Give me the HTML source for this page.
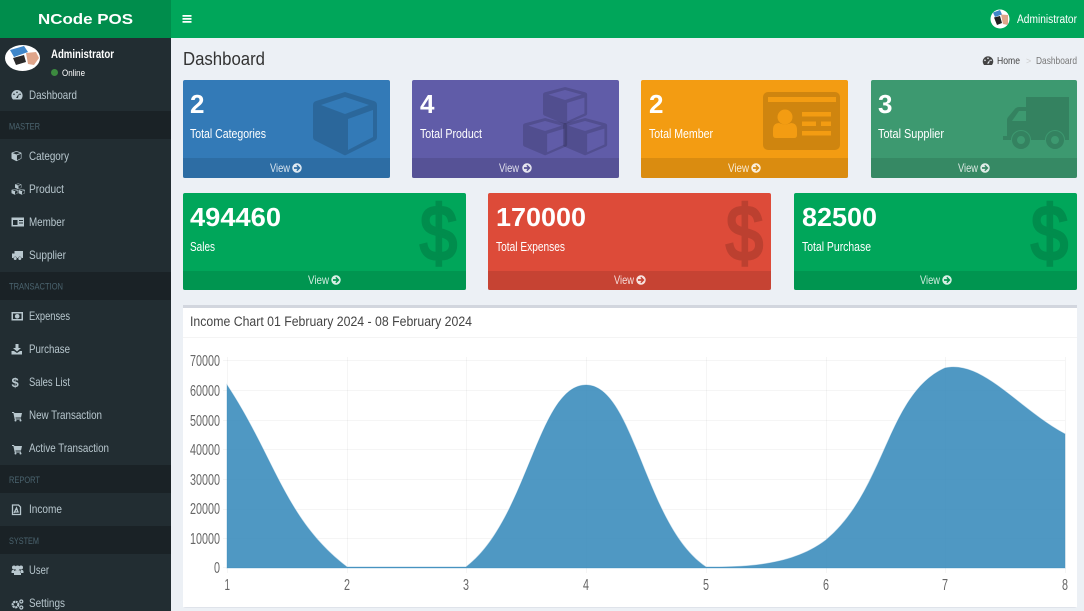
<!DOCTYPE html>
<html lang="en">
<head>
<meta charset="utf-8">
<title>NCode POS - Dashboard</title>
<style>
html,body{margin:0;padding:0;width:1084px;height:611px;overflow:hidden;background:#ecf0f5}
svg{display:block}
text{font-family:"Liberation Sans",sans-serif}
.nav{font-size:12px;fill:#b8c7ce}
.sec{font-size:9.500px;fill:#4b646f}
.num{font-size:26px;font-weight:bold;fill:#fff}
.lbl{font-size:12.500px;fill:#fff}
.view{font-size:12px;fill:rgba(255,255,255,.82)}
.ax{font-size:16px;fill:#666}
.ni{fill:#b8c7ce}
.dk{fill:rgba(0,0,0,.15)}
.ft{fill:rgba(0,0,0,.1)}
</style>
</head>
<body>
<svg width="1084" height="611" viewBox="0 0 1084 611" xmlns="http://www.w3.org/2000/svg">
<defs>
<path id="cube" fill-rule="evenodd" d="M32 0 L61 9 Q64 10 64 13 L64 45 Q64 48 61 49 L33 63 Q32 63.500 31 63 L3 49 Q0 48 0 45 L0 13 Q0 10 3 9 Z M32 5 L8 13 L32 22 L56 13 Z M35 27 L35 58 L60 45 L60 18 Z"/>
<path id="arrow" fill-rule="evenodd" d="M0 -4.700 A4.700 4.700 0 1 1 -0.010 -4.700 Z M0.300 -3.200 L-0.700 -2.200 L0.600 -0.900 L-3 -0.900 L-3 0.900 L0.600 0.900 L-0.700 2.200 L0.300 3.200 L3.500 0 Z"/>
<path id="cart" d="M0 0 H2 L2.400 1 H10 L9 5.500 H3.500 L3.700 6.500 H9 V7.500 H2.700 L1.400 1 H0 Z"/>
<clipPath id="av1"><ellipse cx="22.500" cy="58" rx="17.500" ry="13"/></clipPath>
<clipPath id="av2"><circle cx="1000" cy="19" r="9.500"/></clipPath>
</defs>

<!-- page -->
<rect width="1084" height="611" fill="#ecf0f5"/>

<!-- header -->
<rect x="171" width="913" height="38" fill="#00a65a"/>
<rect width="171" height="38" fill="#008d4c"/>
<text x="38" y="24" font-size="15" font-weight="bold" fill="#fff" textLength="95" lengthAdjust="spacingAndGlyphs">NCode POS</text>
<path d="M182.500 15h9v1.700h-9zM182.500 18h9v1.700h-9zM182.500 21h9v1.700h-9z" fill="#fff"/>
<circle cx="1000" cy="19" r="9.500" fill="#fff"/>
<g clip-path="url(#av2)">
<path d="M993 12.500 L1000 10 L1002 14.500 L995 17 Z" fill="#3f86c9"/>
<path d="M994 17.500 L1000 16 L1002 23 L997 25 Z" fill="#222"/>
<path d="M1001 14.500 L1008 15 L1008 25 L1003 24 Z" fill="#dfa58a"/>
</g>
<text x="1017" y="23" font-size="11.500" fill="#fff" textLength="60" lengthAdjust="spacingAndGlyphs">Administrator</text>

<!-- sidebar -->
<rect y="38" width="171" height="573" fill="#222d32"/>
<ellipse cx="22.500" cy="58" rx="17.500" ry="13" fill="#fff"/>
<g clip-path="url(#av1)">
<path d="M10 50 L24 46 L28 52 L14 57 Z" fill="#3f86c9"/>
<path d="M13 58 L24 55 L26 62 L16 65 Z" fill="#2a2a2a"/>
<path d="M26 53 L36 52 L39 58 L34 65 L28 64 Z" fill="#dfa58a"/>
</g>
<text x="51" y="58" font-size="11.500" font-weight="bold" fill="#fff" textLength="63" lengthAdjust="spacingAndGlyphs">Administrator</text>
<circle cx="54.500" cy="72.500" r="3.500" fill="#3c8a3f"/>
<text x="62" y="76" font-size="9" fill="#fff" textLength="23" lengthAdjust="spacingAndGlyphs">Online</text>

<rect y="111" width="171" height="28" fill="#1a2226"/>
<rect y="272" width="171" height="28" fill="#1a2226"/>
<rect y="465" width="171" height="28" fill="#1a2226"/>
<rect y="526" width="171" height="28" fill="#1a2226"/>
<text class="sec" x="9" y="129.500" textLength="31" lengthAdjust="spacingAndGlyphs">MASTER</text>
<text class="sec" x="9" y="289.500" textLength="54" lengthAdjust="spacingAndGlyphs">TRANSACTION</text>
<text class="sec" x="9" y="483" textLength="31" lengthAdjust="spacingAndGlyphs">REPORT</text>
<text class="sec" x="9" y="544" textLength="30" lengthAdjust="spacingAndGlyphs">SYSTEM</text>

<text class="nav" x="29" y="99" textLength="48" lengthAdjust="spacingAndGlyphs">Dashboard</text>
<text class="nav" x="29" y="160" textLength="40" lengthAdjust="spacingAndGlyphs">Category</text>
<text class="nav" x="29" y="193" textLength="35" lengthAdjust="spacingAndGlyphs">Product</text>
<text class="nav" x="29" y="226" textLength="36" lengthAdjust="spacingAndGlyphs">Member</text>
<text class="nav" x="29" y="259" textLength="37" lengthAdjust="spacingAndGlyphs">Supplier</text>
<text class="nav" x="29" y="320" textLength="41" lengthAdjust="spacingAndGlyphs">Expenses</text>
<text class="nav" x="29" y="353" textLength="41" lengthAdjust="spacingAndGlyphs">Purchase</text>
<text class="nav" x="29" y="386" textLength="41" lengthAdjust="spacingAndGlyphs">Sales List</text>
<text class="nav" x="29" y="419" textLength="73" lengthAdjust="spacingAndGlyphs">New Transaction</text>
<text class="nav" x="29" y="452" textLength="80" lengthAdjust="spacingAndGlyphs">Active Transaction</text>
<text class="nav" x="29" y="513" textLength="33" lengthAdjust="spacingAndGlyphs">Income</text>
<text class="nav" x="29" y="574" textLength="20" lengthAdjust="spacingAndGlyphs">User</text>
<text class="nav" x="29" y="607" textLength="36" lengthAdjust="spacingAndGlyphs">Settings</text>

<!-- sidebar icons -->
<path class="ni" fill-rule="evenodd" d="M13 99.500 A5.600 5.600 0 1 1 21 99.500 Z M17 91.500 a.8 .8 0 1 0 .01 0 Z M14 93.500 a.8 .8 0 1 0 .01 0 Z M20 93.500 a.8 .8 0 1 0 .01 0 Z M16 98 L18 98 L19 93.500 Z"/>
<use href="#cube" class="ni" transform="translate(11.500,151) scale(.156,.16)"/>
<g class="ni">
<use href="#cube" transform="translate(15,183.500) scale(.1,.09)"/>
<use href="#cube" transform="translate(11.500,189) scale(.1,.09)"/>
<use href="#cube" transform="translate(18.500,189) scale(.1,.09)"/>
</g>
<path class="ni" fill-rule="evenodd" d="M11.500 217.500 H24 V226.500 H11.500 Z M13 220 V225 H17.500 V220 Z M19 220 V221 H23 V220 Z M19 222.500 V223.500 H23 V222.500 Z"/>
<path class="ni" d="M12 253.500 L14.500 253.500 L14.500 251 H23 V258 H21.500 A1.800 1.800 0 0 0 18 258 H17 A1.800 1.800 0 0 0 13.500 258 H12 Z"/>
<circle class="ni" cx="15.200" cy="258.500" r="1.500"/><circle class="ni" cx="19.800" cy="258.500" r="1.500"/>
<path class="ni" fill-rule="evenodd" d="M11.500 312 H23 V320.500 H11.500 Z M13 313.500 V319 H21.500 V313.500 Z M17.200 314 A2.300 2.300 0 1 1 17.190 314 Z"/>
<path class="ni" d="M15.500 344 H18.500 V348 H21 L17 351.500 L13 348 H15.500 Z M11.500 351 H14 L17 353 L20 351 H22 V354.500 H11.500 Z"/>
<text x="11.500" y="387" font-size="13" font-weight="bold" fill="#b8c7ce">$</text>
<use href="#cart" class="ni" transform="translate(12,412)"/>
<circle class="ni" cx="15.500" cy="420.500" r="1"/><circle class="ni" cx="20.500" cy="420.500" r="1"/>
<use href="#cart" class="ni" transform="translate(12,445)"/>
<circle class="ni" cx="15.500" cy="453.500" r="1"/><circle class="ni" cx="20.500" cy="453.500" r="1"/>
<path fill="none" stroke="#b8c7ce" stroke-width="1.300" d="M12.500 505 H18.500 L20.500 507 V514.500 H12.500 Z M14 513 L16.500 508 L18 512 H14.500"/>
<g class="ni">
<circle cx="14" cy="567.500" r="2"/><circle cx="21" cy="567.500" r="2"/><circle cx="17.500" cy="568" r="2.500"/>
<path d="M11.500 571.500 Q12 569.500 14 570 L14.500 573 H11.500 Z M23.500 571.500 Q23 569.500 21 570 L20.500 573 H23.500 Z M14 571 Q17.500 569 21 571 V575 H14 Z"/>
</g>
<g fill="none" stroke="#b8c7ce">
<circle cx="15.500" cy="604.500" r="2.800" stroke-width="2.200" stroke-dasharray="2 .6"/>
<circle cx="21.300" cy="601.500" r="1.500" stroke-width="1.200"/>
<circle cx="21.300" cy="607.500" r="1.500" stroke-width="1.200"/>
</g>

<!-- page heading -->
<text x="183" y="65" font-size="18" fill="#333" textLength="82" lengthAdjust="spacingAndGlyphs">Dashboard</text>
<path fill="#444" fill-rule="evenodd" d="M984 65 A5.300 5.300 0 1 1 992 65 Z M988 57.500 a.8 .8 0 1 0 .01 0 Z M985 59.500 a.8 .8 0 1 0 .01 0 Z M991 59.500 a.8 .8 0 1 0 .01 0 Z M987 63.500 L989 63.500 L990 59.500 Z"/>
<text x="997" y="64" font-size="10.500" fill="#444" textLength="23" lengthAdjust="spacingAndGlyphs">Home</text>
<text x="1026" y="64" font-size="9" fill="#ccc">&gt;</text>
<text x="1036" y="64" font-size="10.500" fill="#777" textLength="41" lengthAdjust="spacingAndGlyphs">Dashboard</text>

<!-- row 1 -->
<rect x="183" y="80" width="207" height="98" rx="2" fill="#337ab7"/>
<rect x="183" y="158" width="207" height="20" class="ft"/>
<use href="#cube" class="dk" transform="translate(313,92)"/>
<text class="num" x="190" y="113">2</text>
<text class="lbl" x="190" y="138" textLength="76" lengthAdjust="spacingAndGlyphs">Total Categories</text>
<text class="view" x="270" y="172" textLength="20" lengthAdjust="spacingAndGlyphs">View</text>
<use href="#arrow" fill="#fff" fill-opacity=".85" transform="translate(297,168)"/>

<rect x="412" y="80" width="207" height="98" rx="2" fill="#605ca8"/>
<rect x="412" y="158" width="207" height="20" class="ft"/>
<g class="dk">
<use href="#cube" transform="translate(543,87) scale(.69,.59)"/>
<use href="#cube" transform="translate(523,118) scale(.69,.59)"/>
<use href="#cube" transform="translate(563,118) scale(.69,.59)"/>
</g>
<text class="num" x="420" y="113">4</text>
<text class="lbl" x="420" y="138" textLength="62" lengthAdjust="spacingAndGlyphs">Total Product</text>
<text class="view" x="499" y="172" textLength="20" lengthAdjust="spacingAndGlyphs">View</text>
<use href="#arrow" fill="#fff" fill-opacity=".85" transform="translate(527,168)"/>

<rect x="641" y="80" width="207" height="98" rx="2" fill="#f39c12"/>
<rect x="641" y="158" width="207" height="20" class="ft"/>
<rect x="763" y="92" width="77" height="58" rx="5" fill="#cf850f"/>
<g fill="#f39c12">
<rect x="768" y="97" width="68" height="5"/>
<circle cx="785" cy="117" r="7.500"/>
<path d="M773 130 Q773 123 779 123 Q785 126 791 123 Q797 123 797 130 V135 Q797 138 794 138 H776 Q773 138 773 135 Z"/>
<rect x="802" y="112" width="29" height="4.500"/>
<rect x="802" y="121.500" width="14" height="4.500"/>
<rect x="821" y="121.500" width="10" height="4.500"/>
<rect x="802" y="131" width="29" height="4.500"/>
</g>
<text class="num" x="649" y="113">2</text>
<text class="lbl" x="649" y="138" textLength="64" lengthAdjust="spacingAndGlyphs">Total Member</text>
<text class="view" x="728" y="172" textLength="21" lengthAdjust="spacingAndGlyphs">View</text>
<use href="#arrow" fill="#fff" fill-opacity=".85" transform="translate(756,168)"/>

<rect x="871" y="80" width="206" height="98" rx="2" fill="#3d9970"/>
<rect x="871" y="158" width="206" height="20" class="ft"/>
<path fill="#348260" fill-rule="evenodd" d="M1026 97 H1069 V140 H1065 A10 10 0 0 0 1045 140 H1031 A10 10 0 0 0 1011 140 H1003 V136 H1007 V120 Q1007 118 1009 116 L1014 110 Q1016 107 1019 107 H1026 Z M1012 121 H1026 V111 H1019 Z"/>
<path fill="#348260" fill-rule="evenodd" d="M1021 131 A9 9 0 1 1 1020.990 131 Z M1021 136 A4 4 0 1 0 1021.010 136 Z M1055 131 A9 9 0 1 1 1054.990 131 Z M1055 136 A4 4 0 1 0 1055.010 136 Z"/>
<text class="num" x="878" y="113">3</text>
<text class="lbl" x="878" y="138" textLength="66" lengthAdjust="spacingAndGlyphs">Total Supplier</text>
<text class="view" x="958" y="172" textLength="20" lengthAdjust="spacingAndGlyphs">View</text>
<use href="#arrow" fill="#fff" fill-opacity=".85" transform="translate(985,168)"/>

<!-- row 2 -->
<rect x="183" y="193" width="283" height="97" rx="2" fill="#00a65a"/>
<rect x="183" y="271" width="283" height="19" class="ft"/>
<text x="420" y="260" font-size="78" fill="#008d4d" stroke="#008d4d" stroke-width="3" textLength="37" lengthAdjust="spacingAndGlyphs">$</text>
<text class="num" x="190" y="226" textLength="91" lengthAdjust="spacingAndGlyphs">494460</text>
<text class="lbl" x="190" y="251" textLength="25" lengthAdjust="spacingAndGlyphs">Sales</text>
<text class="view" x="308" y="284" textLength="21" lengthAdjust="spacingAndGlyphs">View</text>
<use href="#arrow" fill="#fff" fill-opacity=".85" transform="translate(336,280)"/>

<rect x="488" y="193" width="283" height="97" rx="2" fill="#dd4b39"/>
<rect x="488" y="271" width="283" height="19" class="ft"/>
<text x="726" y="260" font-size="78" fill="#bc4030" stroke="#bc4030" stroke-width="3" textLength="37" lengthAdjust="spacingAndGlyphs">$</text>
<text class="num" x="496" y="226" textLength="90" lengthAdjust="spacingAndGlyphs">170000</text>
<text class="lbl" x="496" y="251" textLength="69" lengthAdjust="spacingAndGlyphs">Total Expenses</text>
<text class="view" x="614" y="284" textLength="20" lengthAdjust="spacingAndGlyphs">View</text>
<use href="#arrow" fill="#fff" fill-opacity=".85" transform="translate(641,280)"/>

<rect x="794" y="193" width="283" height="97" rx="2" fill="#00a65a"/>
<rect x="794" y="271" width="283" height="19" class="ft"/>
<text x="1031" y="260" font-size="78" fill="#008d4d" stroke="#008d4d" stroke-width="3" textLength="37" lengthAdjust="spacingAndGlyphs">$</text>
<text class="num" x="802" y="226" textLength="75" lengthAdjust="spacingAndGlyphs">82500</text>
<text class="lbl" x="802" y="251" textLength="69" lengthAdjust="spacingAndGlyphs">Total Purchase</text>
<text class="view" x="920" y="284" textLength="20" lengthAdjust="spacingAndGlyphs">View</text>
<use href="#arrow" fill="#fff" fill-opacity=".85" transform="translate(947,280)"/>

<!-- chart box -->
<rect x="183" y="305" width="894" height="303" rx="3" fill="#dfe3ea"/>
<rect x="183" y="305" width="894" height="3" fill="#d2d6de"/>
<rect x="183" y="308" width="894" height="299" fill="#fff"/>
<rect x="183" y="337" width="894" height="1" fill="#f4f4f4"/>
<text x="190" y="326" font-size="13.500" fill="#444" textLength="282" lengthAdjust="spacingAndGlyphs">Income Chart 01 February 2024 - 08 February 2024</text>

<g stroke="#000" stroke-opacity=".04" stroke-width="1">
<path d="M223 360.500H1065M223 390.500H1065M223 420.500H1065M223 449.500H1065M223 479.500H1065M223 509.500H1065M223 538.500H1065M223 567.500H1065"/>
<path d="M227.500 357V573M347.500 357V573M466.500 357V573M586.500 357V573M706.500 357V573M826.500 357V573M945.500 357V573M1065.500 357V573"/>
</g>

<path fill="#3c8dbc" fill-opacity=".9" stroke="#3c8dbc" stroke-opacity=".35" stroke-width="1" d="M227 385 C275 458 285 520 347 567 C381 567 432 567 466 567 C528 520 538 385 586 385 C634 385 645 527 706 567 C741 567 791 567 826 540 C886 490 887 394 945 368 C983 360 1017 408 1065 434 L1065 568 L227 568 Z"/>

<g class="ax" text-anchor="end">
<text x="220" y="366" textLength="30" lengthAdjust="spacingAndGlyphs">70000</text>
<text x="220" y="396" textLength="30" lengthAdjust="spacingAndGlyphs">60000</text>
<text x="220" y="426" textLength="30" lengthAdjust="spacingAndGlyphs">50000</text>
<text x="220" y="455" textLength="30" lengthAdjust="spacingAndGlyphs">40000</text>
<text x="220" y="485" textLength="30" lengthAdjust="spacingAndGlyphs">30000</text>
<text x="220" y="514" textLength="30" lengthAdjust="spacingAndGlyphs">20000</text>
<text x="220" y="544" textLength="30" lengthAdjust="spacingAndGlyphs">10000</text>
<text x="220" y="573" textLength="6" lengthAdjust="spacingAndGlyphs">0</text>
</g>
<g class="ax">
<text x="224.500" y="590" textLength="5.500" lengthAdjust="spacingAndGlyphs">1</text>
<text x="344" y="590" textLength="6" lengthAdjust="spacingAndGlyphs">2</text>
<text x="463" y="590" textLength="6" lengthAdjust="spacingAndGlyphs">3</text>
<text x="583" y="590" textLength="6" lengthAdjust="spacingAndGlyphs">4</text>
<text x="703" y="590" textLength="6" lengthAdjust="spacingAndGlyphs">5</text>
<text x="823" y="590" textLength="6" lengthAdjust="spacingAndGlyphs">6</text>
<text x="942" y="590" textLength="6" lengthAdjust="spacingAndGlyphs">7</text>
<text x="1062" y="590" textLength="6" lengthAdjust="spacingAndGlyphs">8</text>
</g>
</svg>
</body>
</html>
